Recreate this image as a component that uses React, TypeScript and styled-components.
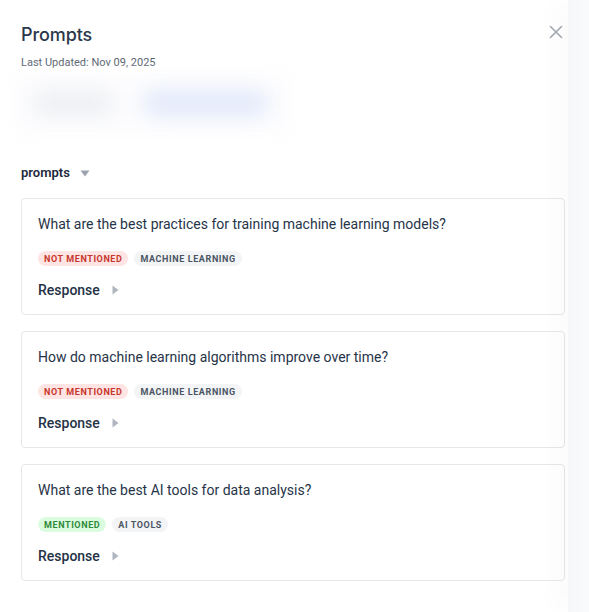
import React from "react";
import styled, { createGlobalStyle } from "styled-components";

const GlobalStyle = createGlobalStyle`
  html, body {
    margin: 0;
    padding: 0;
    background: #fff;
    font-family: Roboto, "Liberation Sans", sans-serif;
    color: #1e293b;
  }
  * { box-sizing: border-box; }
`;

const SCPage = styled.div`
  display: flex;
  width: 100vw;
  min-height: 100vh;
`;

const SCPanel = styled.aside`
  width: 568px;
  min-height: 612px;
  background: #fff;
  padding: 22px 3px 30px 21px;
  display: flex;
  flex-direction: column;
`;

const SCHeader = styled.header`
  display: flex;
  justify-content: space-between;
  align-items: flex-start;
`;

const SCTitle = styled.h1`
  margin: 0;
  font-family: Inter, "Noto Sans", sans-serif;
  font-size: 18px;
  font-weight: 500;
  line-height: 26px;
  color: #2b384c;
  letter-spacing: -0.1px;
`;

const SCUpdated = styled.p`
  margin: 8px 0 0;
  font-size: 11px;
  line-height: 14px;
  color: #4b5563;
`;

const SCClose = styled.button`
  border: 0;
  background: none;
  padding: 0;
  margin: 1px 0 0 0;
  width: 18px;
  height: 18px;
  display: flex;
  align-items: center;
  justify-content: center;
  cursor: pointer;
`;

const SCBlurred = styled.div`
  margin: 4px 0 0 -6px;
  width: 276px;
  height: 58px;
  background: #fcfcfe;
  display: flex;
  align-items: center;
  gap: 30px;
  padding: 0 18px;
  filter: blur(10px);
`;

const SCBlurPill = styled.span<{ $w: number; $bg: string }>`
  display: block;
  width: ${(p) => p.$w}px;
  height: 26px;
  border-radius: 13px;
  background: ${(p) => p.$bg};
`;

const SCSectionToggle = styled.div`
  margin-top: 33px;
  display: flex;
  align-items: center;
  gap: 10px;
  font-size: 13px;
  font-weight: 600;
  color: #1e293b;
  line-height: 16px;
`;

const SCList = styled.div`
  margin-top: 17px;
  display: flex;
  flex-direction: column;
  gap: 16px;
`;

const SCCard = styled.article`
  border: 1px solid #e5e7eb;
  border-radius: 4px;
  padding: 14px 16px 15px;
  background: #fff;
`;

const SCQuestion = styled.p`
  margin: 0;
  font-size: 14px;
  line-height: 22px;
  color: #273448;
`;

const SCTags = styled.div`
  margin-top: 16px;
  display: flex;
  gap: 6px;
`;

const SCTag = styled.span<{ $tone: "red" | "green" | "gray" }>`
  display: inline-flex;
  align-items: center;
  height: 15px;
  padding: 0 6px;
  border-radius: 8px;
  font-size: 9px;
  font-weight: 700;
  letter-spacing: 0.6px;
  text-transform: uppercase;
  background: ${(p) =>
    p.$tone === "red" ? "#fee4e2" : p.$tone === "green" ? "#dcfce0" : "#f3f4f6"};
  color: ${(p) =>
    p.$tone === "red" ? "#c8372d" : p.$tone === "green" ? "#2f8a3a" : "#4b5563"};
`;

const SCResponse = styled.div`
  margin-top: 15px;
  display: flex;
  align-items: center;
  gap: 12px;
  font-size: 14px;
  font-weight: 500;
  line-height: 18px;
  color: #253246;
`;

const SCSide = styled.div`
  flex: 1;
  background: linear-gradient(to right, #f6f7f8, #f9fafb);
  box-shadow: -14px 0 22px rgba(15, 23, 42, 0.02);
`;

const prompts = [
  {
    q: "What are the best practices for training machine learning models?",
    status: "Not Mentioned",
    topic: "Machine Learning",
  },
  {
    q: "How do machine learning algorithms improve over time?",
    status: "Not Mentioned",
    topic: "Machine Learning",
  },
  {
    q: "What are the best AI tools for data analysis?",
    status: "Mentioned",
    topic: "AI Tools",
  },
];

const CaretDown = () => (
  <svg width="10" height="7" viewBox="0 0 10 7">
    <path d="M0.5 0.5h9L5 6.5z" fill="#9ca3af" />
  </svg>
);

const CaretRight = () => (
  <svg width="7" height="10" viewBox="0 0 7 10">
    <path d="M0.5 0.5v9L6.5 5z" fill="#b0b6bf" />
  </svg>
);

const App = () => {
  return (
    <>
      <GlobalStyle />
      <SCPage>
        <SCPanel>
          <SCHeader>
            <div>
              <SCTitle>Prompts</SCTitle>
              <SCUpdated>Last Updated: Nov 09, 2025</SCUpdated>
            </div>
            <SCClose aria-label="Close">
              <svg width="14" height="14" viewBox="0 0 14 14">
                <path
                  d="M1.5 1.5l11 11M12.5 1.5l-11 11"
                  stroke="#a3aab4"
                  strokeWidth="1.6"
                  strokeLinecap="round"
                />
              </svg>
            </SCClose>
          </SCHeader>

          <SCBlurred>
            <SCBlurPill $w={80} $bg="#eef0f3" />
            <SCBlurPill $w={125} $bg="#e2e9fa" />
          </SCBlurred>

          <SCSectionToggle>
            prompts
            <CaretDown />
          </SCSectionToggle>

          <SCList>
            {prompts.map((p) => (
              <SCCard key={p.q}>
                <SCQuestion>{p.q}</SCQuestion>
                <SCTags>
                  <SCTag $tone={p.status === "Mentioned" ? "green" : "red"}>
                    {p.status}
                  </SCTag>
                  <SCTag $tone="gray">{p.topic}</SCTag>
                </SCTags>
                <SCResponse>
                  Response
                  <CaretRight />
                </SCResponse>
              </SCCard>
            ))}
          </SCList>
        </SCPanel>
        <SCSide />
      </SCPage>
    </>
  );
};

export default App;
